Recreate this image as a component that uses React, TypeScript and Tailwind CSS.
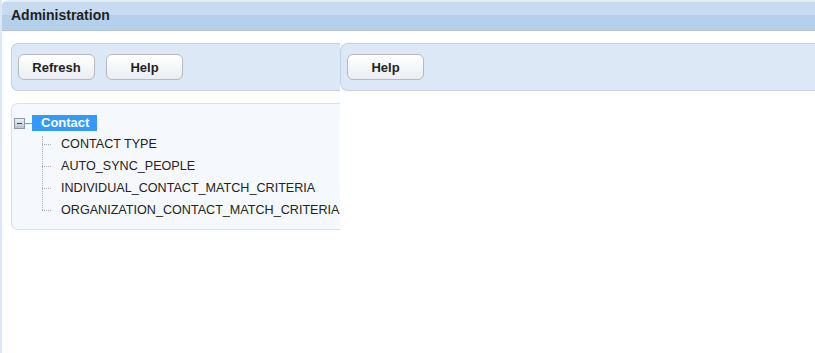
const children = [
  "CONTACT TYPE",
  "AUTO_SYNC_PEOPLE",
  "INDIVIDUAL_CONTACT_MATCH_CRITERIA",
  "ORGANIZATION_CONTACT_MATCH_CRITERIA",
];

function ToolButton({ label, className = "" }: { label: string; className?: string }) {
  return (
    <button
      className={`h-[26px] w-[77px] rounded-[6px] border border-[#b9b9b9] bg-gradient-to-b from-[#ffffff] to-[#e9eef4] pt-[1px] text-[13px] font-bold text-[#222] shadow-[inset_0_1px_0_#fff] ${className}`}
    >
      {label}
    </button>
  );
}

export default function App() {
  return (
    <div className="h-[353px] w-[815px] overflow-hidden bg-white font-['Liberation_Sans',Arial,sans-serif]">
      <div className="flex h-full flex-col border-l-2 border-[#dce8f5]">
        {/* title bar */}
        <div className="h-[31px] shrink-0 rounded-tl-[6px] border-b border-[#aac6e4] bg-[linear-gradient(#e2ecf7_0px,#e2ecf7_2px,#c6daf0_2px,#c6daf0_15px,#b5d0ea_15px)] px-[9px] pt-[5px] text-[14px] font-bold text-[#1f1f1f]">
          Administration
        </div>

        <div className="flex flex-1 pt-[12px]">
          {/* left column */}
          <div className="ml-[9px] flex w-[329px] shrink-0 flex-col gap-[12px] overflow-hidden">
            <div className="flex h-[48px] items-center gap-[11px] rounded-l-[7px] border border-r-0 border-[#bcd3ec] bg-[#dce8f5] pl-[6px]">
              <ToolButton label="Refresh" className="w-[76px]" />
              <ToolButton label="Help" />
            </div>
            <div className="h-[127px] rounded-l-[7px] border border-r-0 border-[#d4e2f1] bg-[#f5f9fd] pl-[2px] pt-[11px]">
              <div className="flex h-[16px] items-center">
                <div className="flex h-[11px] w-[11px] items-center justify-center border border-[#8a9bb0] bg-gradient-to-b from-[#e9eef4] to-[#b8c4d2]">
                  <div className="h-[1px] w-[5px] bg-[#3a4656]" />
                </div>
                <div className="h-px w-[7px] bg-[#8a9bb0]" />
                <div className="flex h-[16px] items-center bg-[#3399ff] pl-[9px] pr-[8px] text-[13px] font-bold text-white">
                  Contact
                </div>
              </div>
              <div className="relative ml-[28px] mt-[2px]">
                <div className="absolute left-0 top-[3px] h-[74px] border-l border-dotted border-[#b0b0b0]" />
                {children.map((c) => (
                  <div key={c} className="flex h-[22px] items-center">
                    <div className="h-px w-[9px] shrink-0 border-t border-dotted border-[#b0b0b0]" />
                    <span className="ml-[10px] shrink-0 whitespace-nowrap text-[12.6px] text-[#222]">{c}</span>
                  </div>
                ))}
              </div>
            </div>
          </div>

          {/* right column */}
          <div className="flex-1">
            <div className="flex h-[48px] items-center rounded-l-[8px] border border-r-0 border-[#bcd3ec] bg-[#dce8f5] pl-[6px]">
              <ToolButton label="Help" />
            </div>
          </div>
        </div>
      </div>
    </div>
  );
}
